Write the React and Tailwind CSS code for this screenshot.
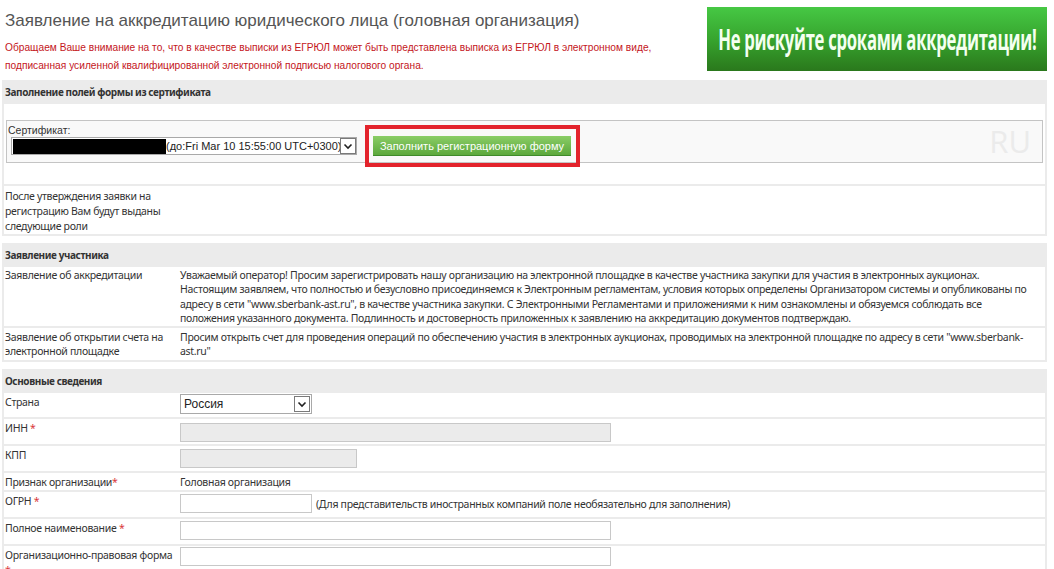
import React from "react";

const T = "font-['Noto_Sans',sans-serif] text-[10.5px] tracking-[-0.3px] text-[#333]";
const TB = "font-['Noto_Sans',sans-serif] text-[10px] tracking-[-0.4px] font-bold text-[#333]";

function Chevron() {
  return (
    <span className="flex h-[16px] w-[16px] shrink-0 items-center justify-center border border-[#7a7a7a] bg-white">
      <svg width="10" height="8" viewBox="0 0 10 8">
        <path d="M1.5 2.5 L5 6 L8.5 2.5" fill="none" stroke="#222" strokeWidth="1.6" />
      </svg>
    </span>
  );
}

function Star() {
  return <span className="text-[#d9373b]">*</span>;
}

function Header({ children }) {
  return (
    <div className="flex h-[20px] items-center pl-[1px]">
      <span className={TB}>{children}</span>
    </div>
  );
}

function Row({ label, h, children }) {
  return (
    <div className={`grid grid-cols-[176px_1fr] bg-white ${h}`}>
      <div className={`${T} pl-[1px] pt-[2px] leading-[15px]`}>{label}</div>
      <div>{children}</div>
    </div>
  );
}

export default function App() {
  return (
    <div className="h-[569px] w-[1054px] overflow-hidden bg-white">
      <div className="flex">
        <div className="pl-[5px] pt-[9px]">
          <h1 className="whitespace-nowrap font-['Liberation_Sans',Arial,sans-serif] text-[17px] font-normal leading-[24px] text-[#555]">
            Заявление на аккредитацию юридического лица (головная организация)
          </h1>
          <p className="mt-[6px] whitespace-nowrap font-['Liberation_Sans',Arial,sans-serif] text-[10.2px] leading-[18px] text-[#c4161c]">
            Обращаем Ваше внимание на то, что в качестве выписки из ЕГРЮЛ может быть представлена выписка из ЕГРЮЛ в электронном виде,
            <br />
            подписанная усиленной квалифицированной электронной подписью налогового органа.
          </p>
        </div>
        <div className="ml-auto mr-[7px] mt-[7px] flex h-[64px] w-[340px] shrink-0 items-center justify-center overflow-hidden bg-linear-to-b from-[#46c844] via-[#37a52e] to-[#2a781c]">
          <span className="inline-block scale-x-[0.576] whitespace-nowrap font-['Open_Sans',sans-serif] text-[29px] font-bold tracking-[-0.5px] text-[#f4fff0]">
            Не рискуйте сроками аккредитации!
          </span>
        </div>
      </div>

      <div className="ml-[2px] mt-[5px] w-[1045px]">
        {/* Section 1 */}
        <div className="flex flex-col gap-[2px] bg-[#ebebeb] p-[2px]">
          <Header>Заполнение полей формы из сертификата</Header>
          <div className="relative h-[80px] bg-white px-[2px] pt-[16px]">
            <div className="flex h-[43px] items-center border border-[#c4c4c4] bg-[#f9f9f9] pr-[11px]">
              <div className="flex flex-col self-start pl-[1px] pt-[3px]">
                <span className="font-['Liberation_Sans',Arial,sans-serif] text-[10.5px] leading-[12px] text-[#333]">Сертификат:</span>
                <div className="flex items-center">
                  <div className="ml-[3px] flex h-[18px] w-[346px] items-center overflow-hidden border border-[#a9a9a9] bg-white">
                    <span className="ml-[1px] h-[15px] w-[153px] shrink-0 bg-black" />
                    <span className="flex-1 overflow-hidden whitespace-nowrap font-['Liberation_Sans',Arial,sans-serif] text-[11px] leading-[16px] text-[#222]">
                      (до:Fri Mar 10 15:55:00 UTC+0300)
                    </span>
                    <Chevron />
                  </div>
                  <button className="ml-[16px] h-[20px] w-[198px] whitespace-nowrap border-b border-[#3f8a2a] bg-linear-to-b from-[#8acd66] to-[#5ca83c] font-['Liberation_Sans',Arial,sans-serif] text-[11px] leading-[18px] text-white">
                    Заполнить регистрационную форму
                  </button>
                </div>
              </div>
              <span className="ml-auto font-['Open_Sans',sans-serif] text-[31px] leading-none text-[#ebebeb]">RU</span>
            </div>
            <div className="pointer-events-none absolute left-[361px] top-[21px] h-[42px] w-[215px] border-[4px] border-[#e3232c]" />
          </div>
          <div className={`h-[48px] bg-white pl-[1px] pt-[3px] ${T} leading-[15px]`}>
            После утверждения заявки на
            <br />
            регистрацию Вам будут выданы
            <br />
            следующие роли
          </div>
        </div>

        {/* Section 2 */}
        <div className="mt-[7px] flex flex-col gap-[2px] bg-[#ebebeb] p-[2px]">
          <Header>Заявление участника</Header>
          <div className={`grid h-[59px] grid-cols-[176px_1fr] bg-white pt-[1px] ${T} leading-[14.3px]`}>
            <div className="pl-[1px]">Заявление об аккредитации</div>
            <div className="whitespace-nowrap">
              Уважаемый оператор! Просим зарегистрировать нашу организацию на электронной площадке в качестве участника закупки для участия в электронных аукционах.
              <br />
              Настоящим заявляем, что полностью и безусловно присоединяемся к Электронным регламентам, условия которых определены Организатором системы и опубликованы по
              <br />
              адресу в сети "www.sberbank-ast.ru", в качестве участника закупки. С Электронными Регламентами и приложениями к ним ознакомлены и обязуемся соблюдать все
              <br />
              положения указанного документа. Подлинность и достоверность приложенных к заявлению на аккредитацию документов подтверждаю.
            </div>
          </div>
          <div className={`grid h-[32px] grid-cols-[176px_1fr] bg-white pt-[2px] ${T} leading-[14.3px]`}>
            <div className="whitespace-nowrap pl-[1px]">
              Заявление об открытии счета на
              <br />
              электронной площадке
            </div>
            <div className="whitespace-nowrap">
              Просим открыть счет для проведения операций по обеспечению участия в электронных аукционах, проводимых на электронной площадке по адресу в сети "www.sberbank-
              <br />
              ast.ru"
            </div>
          </div>
        </div>

        {/* Section 3 */}
        <div className="mt-[7px] flex flex-col gap-[2px] bg-[#ebebeb] p-[2px]">
          <Header>Основные сведения</Header>
          <Row label="Страна" h="h-[24px]">
            <div className="mt-[1px] flex h-[20px] w-[132px] items-center border border-[#a9a9a9] bg-white pl-[3px] pr-[1px]">
              <span className="flex-1 font-['Liberation_Sans',Arial,sans-serif] text-[12px] text-[#222]">Россия</span>
              <Chevron />
            </div>
          </Row>
          <Row label={<>ИНН <Star /></>} h="h-[25px]">
            <div className="mt-[4px] h-[19px] w-[431px] border border-[#c8c8c8] bg-[#ebebeb]" />
          </Row>
          <Row label="КПП" h="h-[25px]">
            <div className="mt-[3px] h-[19px] w-[177px] border border-[#c8c8c8] bg-[#ebebeb]" />
          </Row>
          <Row label={<>Признак организации<Star /></>} h="h-[17px]">
            <div className={`${T} pt-[2px] leading-[15px]`}>Головная организация</div>
          </Row>
          <Row label={<>ОГРН <Star /></>} h="h-[25px]">
            <div className="flex items-center">
              <div className="mt-[2px] h-[19px] w-[132px] border border-[#c8c8c8] bg-white" />
              <span className={`${T} ml-[4px] mt-[3px] whitespace-nowrap leading-[15px]`}>
                (Для представительств иностранных компаний поле необязательно для заполнения)
              </span>
            </div>
          </Row>
          <Row label={<>Полное наименование <Star /></>} h="h-[25px]">
            <div className="mt-[2px] h-[19px] w-[431px] border border-[#c8c8c8] bg-white" />
          </Row>
          <Row label={<span className="whitespace-nowrap">Организационно-правовая форма<br /><Star /></span>} h="h-[30px]">
            <div className="mt-[1px] h-[19px] w-[431px] border border-[#c8c8c8] bg-white" />
          </Row>
        </div>
      </div>
    </div>
  );
}
